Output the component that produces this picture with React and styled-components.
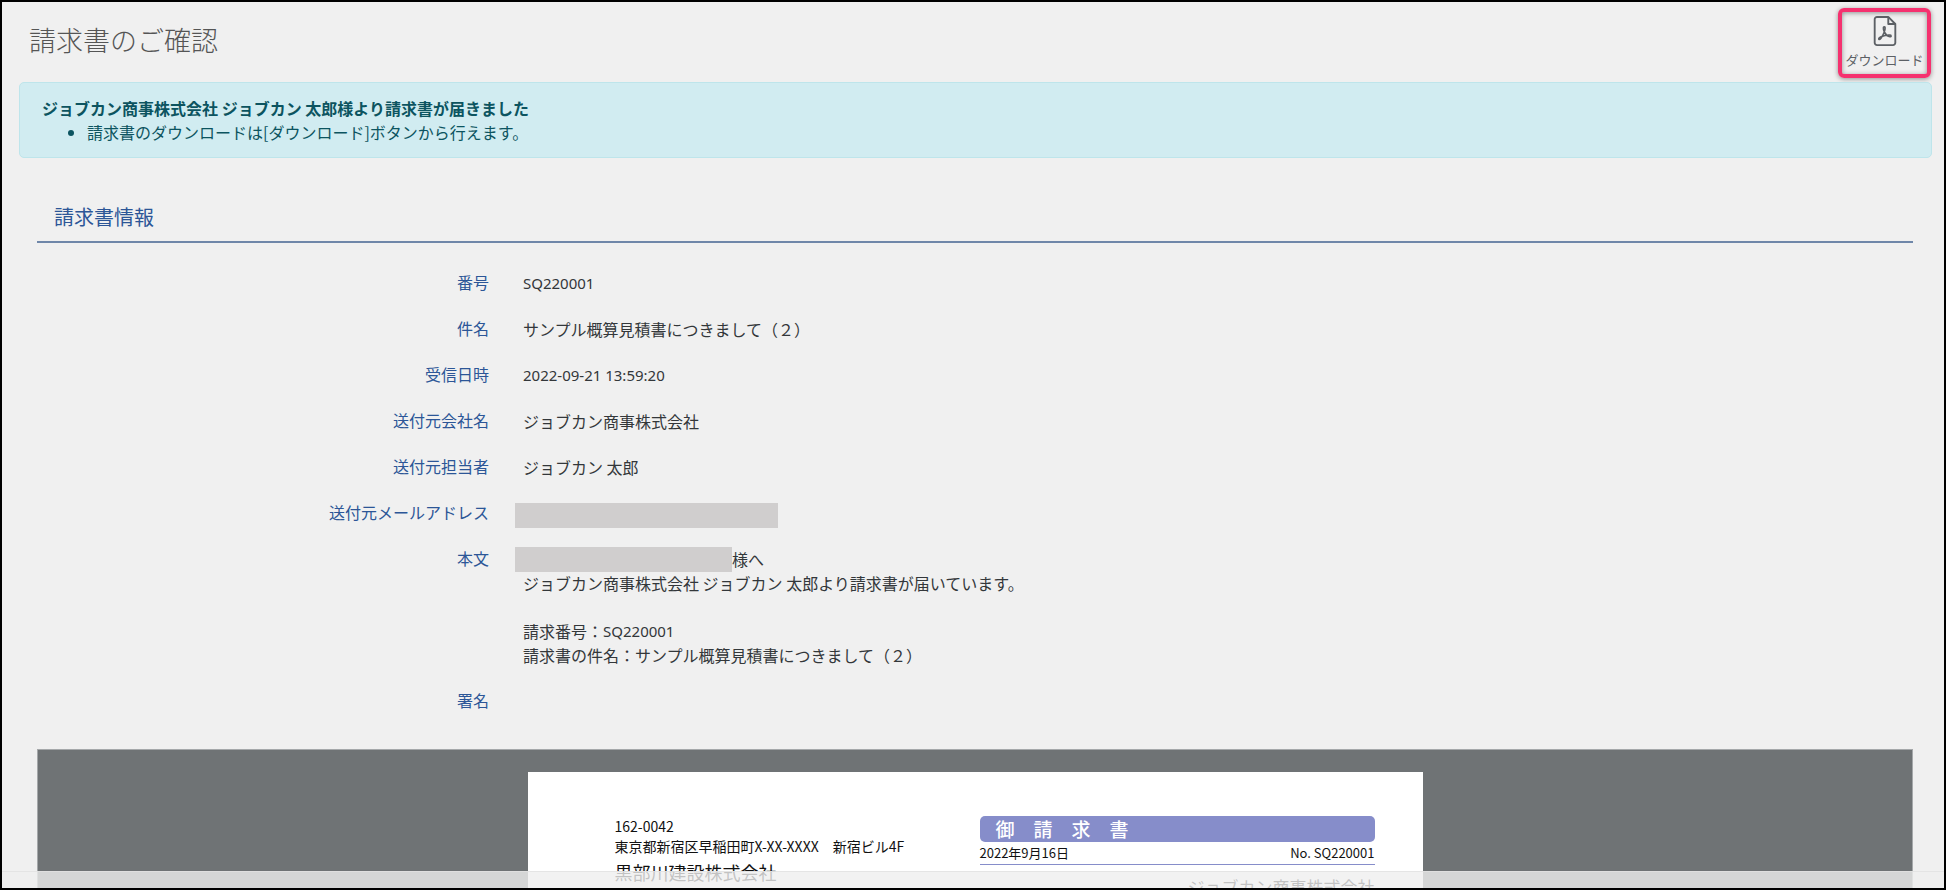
import React from 'react';
import styled, { createGlobalStyle } from 'styled-components';

function PdfIcon() {
	return (
		<svg
			width="24"
			height="32"
			viewBox="0 0 24 32"
			fill="none"
			stroke="currentColor"
			strokeWidth="2"
			strokeLinejoin="round"
			aria-hidden="true"
		>
			<path d="M3.500 1H15.500L23 8.500V28.500A2.500 2.500 0 0 1 20.500 31H3.500A2.500 2.500 0 0 1 1 28.500V3.500A2.500 2.500 0 0 1 3.500 1Z" />
			<path d="M15.500 1V8.500H23" />
			<path
				strokeWidth="1.700"
				d="M11 11.500c-1.600.6-.4 4 .6 6 1.200 2.300 3.400 4.400 5.600 4.700 1.600.2 1.800-1.700.2-1.900-3-.3-6.800.6-9.600 1.900-1.800.9-3 2-2.200 2.700 1 .8 2.800-2 4-4.300 1.300-2.600 2.700-6 2.500-8-.1-.9-.6-1.200-1.100-1.100z"
			/>
		</svg>
	);
}

function Message() {
	return (
		<>
			<Line>
				<Mask $width="217px" />
				様へ
			</Line>
			<Line>ジョブカン商事株式会社 ジョブカン 太郎より請求書が届いています。</Line>
			<Line />
			<Line>
				請求番号：<Latin>SQ220001</Latin>
			</Line>
			<Line>請求書の件名：サンプル概算見積書につきまして（２）</Line>
		</>
	);
}

function MailAddress() {
	return (
		<Line>
			<Mask $width="263px" $top="2px" />
		</Line>
	);
}

const details = [
	{ label: '番号', value: 'SQ220001', latin: true },
	{ label: '件名', value: 'サンプル概算見積書につきまして（２）' },
	{ label: '受信日時', value: '2022-09-21 13:59:20', latin: true },
	{ label: '送付元会社名', value: 'ジョブカン商事株式会社' },
	{ label: '送付元担当者', value: 'ジョブカン 太郎' },
	{ label: '送付元メールアドレス', value: <MailAddress /> },
	{ label: '本文', value: <Message /> },
	{ label: '署名', value: '' },
];

export default function App() {
	return (
		<Frame>
			<GlobalStyle />
			<Header>
				<Title>請求書のご確認</Title>
				<DownloadButton type="button">
					<PdfIcon />
					ダウンロード
				</DownloadButton>
			</Header>

			<Alert role="alert">
				<strong>ジョブカン商事株式会社 ジョブカン 太郎様より請求書が届きました</strong>
				<AlertList>
					<li>請求書のダウンロードは[ダウンロード]ボタンから行えます。</li>
				</AlertList>
			</Alert>

			<Section>
				<SectionTitle>請求書情報</SectionTitle>
				<Details>
					{details.map((item) => (
						<Row key={item.label}>
							<Label>{item.label}</Label>
							<Value>{item.latin ? <Latin>{item.value}</Latin> : item.value}</Value>
						</Row>
					))}
				</Details>

				<Preview>
					<Paper>
						<Recipient>
							<Address>
								162-0042
								<br />
								東京都新宿区早稲田町X-XX-XXXX　新宿ビル4F
							</Address>
							<Company>黒部川建設株式会社</Company>
						</Recipient>
						<Issuer>
							<InvoiceTitle>御　請　求　書</InvoiceTitle>
							<InvoiceMeta>
								<span>2022年9月16日</span>
								<span>No. SQ220001</span>
							</InvoiceMeta>
							<IssuerName>ジョブカン商事株式会社</IssuerName>
						</Issuer>
					</Paper>
				</Preview>
			</Section>
			<FooterBar />
		</Frame>
	);
}

const GlobalStyle = createGlobalStyle`
	* {
		box-sizing: border-box;
	}
	body {
		margin: 0;
		background-color: #f0f0f0;
		color: #33373a;
		font-family: 'Noto Sans CJK JP', sans-serif;
		font-size: 16px;
		line-height: 24px;
	}
`;
const Frame = styled.div`
	display: flex;
	flex-direction: column;
	height: 100vh;
	overflow: hidden;
	position: relative;
	border: 2px solid #000;
`;
const Header = styled.header`
	display: flex;
	justify-content: space-between;
	align-items: flex-start;
	flex-shrink: 0;
	height: 80px;
	padding: 6px 13px 0 27px;
`;
const Title = styled.h1`
	margin: 0;
	padding-top: 12px;
	color: #555;
	font-size: 27px;
	font-weight: 300;
	line-height: 40px;
`;
const DownloadButton = styled.button`
	display: flex;
	flex-direction: column;
	align-items: center;
	width: 93px;
	height: 70px;
	padding: 4px 0 0;
	border: 4px solid #f5316f;
	border-radius: 6px;
	background: none;
	box-shadow: 0 1px 5px rgba(0, 0, 0, 0.4), inset 0 1px 5px rgba(0, 0, 0, 0.4);
	color: #5c6065;
	font-family: inherit;
	font-size: 13px;
	line-height: 28px;
	white-space: nowrap;
	cursor: pointer;
`;
const Alert = styled.div`
	flex-shrink: 0;
	height: 76px;
	margin: 0 12px 0 17px;
	padding: 13px 22px;
	border: 1px solid #bee5eb;
	border-radius: 5px;
	background-color: #d1ecf1;
	color: #0c5460;
`;
const AlertList = styled.ul`
	margin: 0;
	padding-left: 45px;
`;
const Section = styled.section`
	display: flex;
	flex-direction: column;
	flex: 1;
	min-height: 0;
	padding: 40px 31px 0 35px;
`;
const SectionTitle = styled.h2`
	margin: 0 0 16px;
	padding: 3px 17px 8px;
	border-bottom: 2px solid #6f87a9;
	color: #2c5697;
	font-size: 20px;
	font-weight: 400;
	line-height: 32px;
`;
const Details = styled.dl`
	margin: 0 0 26px;
`;
const Row = styled.div`
	display: grid;
	grid-template-columns: 25% 1fr;
	padding: 11px 0;
`;
const Label = styled.dt`
	padding-right: 17px;
	color: #2c5697;
	text-align: right;
`;
const Value = styled.dd`
	margin: 0 0 -1px;
	padding: 1px 0 0 17px;
`;
const Latin = styled.span`
	display: block;
	font-family: 'Noto Sans', sans-serif;
	font-size: 15px;
`;
const Line = styled.div`
	display: flex;
	height: 24px;
`;
const Mask = styled.span`
	display: block;
	width: ${({ $width }) => $width};
	height: 25px;
	margin-top: ${({ $top }) => $top || 0};
	margin-left: -8px;
	background-color: #d0cece;
`;
const Preview = styled.div`
	display: flex;
	justify-content: center;
	align-items: flex-start;
	flex: 1;
	padding-top: 22px;
	border: 1px solid #a5a8aa;
	border-bottom: none;
	background-color: #6f7375;
`;
const Paper = styled.article`
	display: flex;
	justify-content: space-between;
	width: 895px;
	height: 1266px;
	padding: 44px 48px 0 87px;
	background-color: #fff;
	color: #111;
`;
const Recipient = styled.div`
	display: flex;
	flex-direction: column;
`;
const Address = styled.p`
	margin: 0;
	font-size: 14px;
	line-height: 20px;
	white-space: nowrap;
`;
const Company = styled.p`
	margin: 2px 0 0;
	font-size: 18px;
	line-height: 28px;
`;
const Issuer = styled.div`
	width: 395px;
`;
const InvoiceTitle = styled.h3`
	margin: 0;
	padding: 0 16px;
	border-radius: 5px;
	background-color: #868dca;
	color: #fff;
	font-size: 19px;
	font-weight: 500;
	line-height: 26px;
`;
const InvoiceMeta = styled.div`
	display: flex;
	justify-content: space-between;
	border-bottom: 1px solid #868dca;
	font-size: 13px;
	line-height: 22px;
`;
const IssuerName = styled.p`
	margin: 8px 0 0;
	font-size: 17px;
	line-height: 28px;
	text-align: right;
`;
const FooterBar = styled.footer`
	position: absolute;
	right: 0;
	bottom: 0;
	left: 0;
	height: 17px;
	border-top: 1px solid rgba(225, 225, 225, 0.8);
	background-color: rgba(239, 239, 239, 0.8);
`;
